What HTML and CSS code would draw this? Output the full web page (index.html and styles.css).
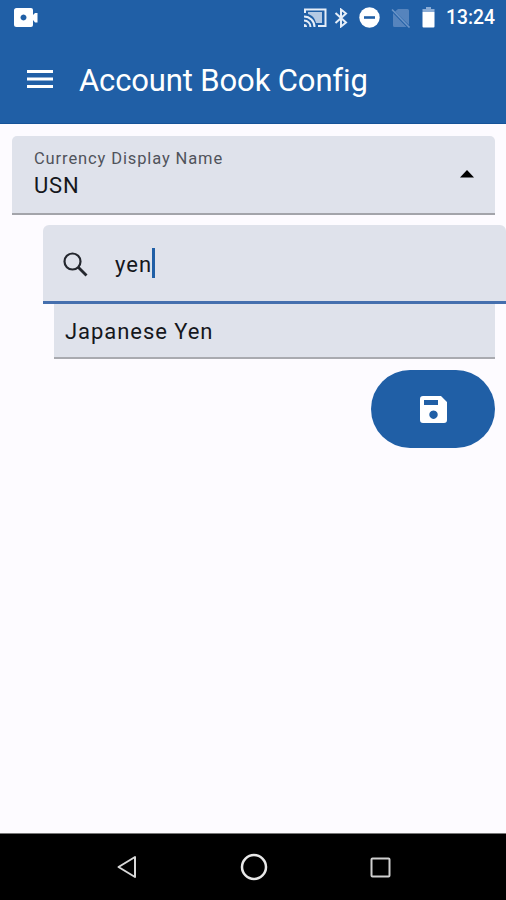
FILE: index.html
```html
<!DOCTYPE html>
<html lang="en">
<head>
<meta charset="utf-8">
<title>Account Book Config</title>
<link rel="stylesheet" href="styles.css">
</head>
<body>
<div class="screen">
  <header class="top">
    <div class="status">
      <svg class="camera" width="24" height="19" viewBox="0 0 24 19"><path fill="#fff" fill-rule="evenodd" d="M2.500 0H17a2 2 0 0 1 2 2V7L21 5H23.500V14.500H21L19 12V17a2 2 0 0 1-2 2H2.500A2.500 2.500 0 0 1 0 16.500V2.500A2.500 2.500 0 0 1 2.500 0ZM9.500 6.500a3 3 0 1 0 .01 0Z"/></svg>
      <svg class="cast" width="24" height="20" viewBox="0 0 24 20"><path fill="#b5cae4" d="M5 4H19V15H13C12 10 9 7 5 6Z"/><path fill="none" stroke="#e6eef8" stroke-width="2" d="M2 5V1.500H22.500V18H15M1 8.500A10.500 10.500 0 0 1 11.500 19M1 12.500A6.500 6.500 0 0 1 7.500 19"/><path fill="#e6eef8" d="M1 16a3 3 0 0 1 3 3H1Z"/></svg>
      <svg class="bluetooth" width="14" height="20" viewBox="0 0 14 20"><path fill="none" stroke="#e6eef8" stroke-width="2" d="M1.500 5L12 14.500L7 18.500V1.500L12 5.500L1.500 15"/></svg>
      <svg class="dnd" width="21" height="21" viewBox="0 0 21 21"><circle cx="10.500" cy="10.500" r="10.200" fill="#fff"/><path stroke="#205fa6" stroke-width="2.600" d="M5 10.500H16"/></svg>
      <svg class="nosim" width="20" height="20" viewBox="0 0 20 20"><path fill="#5684bd" d="M7 1H16.500a1.500 1.500 0 0 1 1.500 1.500V17L4 3.500ZM2 5L15.500 19H3.500A1.500 1.500 0 0 1 2 17.500Z"/><path stroke="#6c95c8" stroke-width="1.600" d="M1 1.500L18.500 19.500"/></svg>
      <svg class="battery" width="13" height="21" viewBox="0 0 13 21"><path fill="#8bacd5" d="M4 0H9V2H12.500V5H.5V2H4Z"/><path fill="#fff" d="M.5 5H12.500V19.500a1 1 0 0 1-1 1H1.500a1 1 0 0 1-1-1Z"/></svg>
      <span class="clock">13:24</span>
    </div>
    <div class="appbar">
      <svg width="26" height="19" viewBox="0 0 26 19"><path fill="#fff" d="M0 0H26V3H0ZM0 7.500H26V10.500H0ZM0 15H26V18H0Z"/></svg>
      <h1>Account Book Config</h1>
    </div>
  </header>
  <main>
    <div class="select">
      <div><div class="label">Currency Display Name</div><div class="value">USN</div></div>
      <svg width="14" height="8" viewBox="0 0 14 8"><path d="M0 7.500L7 0L14 7.500Z"/></svg>
    </div>
    <div class="search">
      <svg width="25" height="25" viewBox="0 0 25 25"><circle cx="9.500" cy="9.500" r="8" fill="none" stroke="#24272e" stroke-width="2.200"/><path stroke="#24272e" stroke-width="2.800" d="M15 15L23.500 23.500"/></svg>
      <span class="query">yen</span><span class="caret"></span>
    </div>
    <div class="option">Japanese Yen</div>
    <div class="save">
      <svg width="27" height="27" viewBox="0 0 27 27"><path fill="#fff" fill-rule="evenodd" d="M3 0H21L27 6V24a3 3 0 0 1-3 3H3a3 3 0 0 1-3-3V3A3 3 0 0 1 3 0ZM4 4V9H18V4ZM13.500 14.500a4.200 4.200 0 1 0 .01 0Z"/></svg>
    </div>
  </main>
  <nav>
    <svg width="20" height="24" viewBox="0 0 20 24"><path fill="none" stroke="#d8d8d8" stroke-width="2" stroke-linejoin="round" d="M18 2V22L1.500 12Z"/></svg>
    <svg width="28" height="28" viewBox="0 0 28 28"><circle cx="14" cy="14" r="12" fill="none" stroke="#e8e8e8" stroke-width="2.500"/></svg>
    <svg width="21" height="21" viewBox="0 0 21 21"><rect x="1.500" y="1.500" width="18" height="18" rx="1" fill="none" stroke="#d0d0d0" stroke-width="2"/></svg>
  </nav>
</div>
</body>
</html>
```
FILE: styles.css
```css
* { box-sizing: border-box; }
body { margin: 0; font-family: Roboto, "Liberation Sans", sans-serif; background: #fdfbff; }
svg { display: block; flex: none; }
.screen { width: 506px; height: 900px; display: flex; flex-direction: column; overflow: hidden; }
.top { height: 124px; background: #205fa6; border-bottom: 1px solid #165398; color: #fff; flex: none; }
.status { height: 35px; display: flex; align-items: center; padding: 0 10px 0 14px; }
.cast { margin-left: 265px; }
.bluetooth { margin-left: 7px; }
.dnd { margin-left: 11px; margin-right: 11px; }
.battery { margin-left: 11px; }
.clock { margin-left: 11px; padding-top: 1px; font-size: 19.3px; font-weight: 500; line-height: 34px; white-space: nowrap; }
.appbar { height: 89px; display: flex; align-items: center; padding-left: 27px; gap: 26px; }
h1 { margin: 0; padding-top: 2px; font-size: 31px; font-weight: 400; letter-spacing: -.13px; line-height: 40px; white-space: nowrap; }
main { flex: 1; padding: 12px 11px 0 12px; display: flex; flex-direction: column; }
.select { height: 79px; background: #dfe2eb; border-bottom: 2px solid #a3a4aa; border-radius: 5px 5px 0 0; display: flex; justify-content: space-between; padding: 12px 21px 0 22px; }
.select svg { margin-top: 22px; }
.label { font-size: 16.5px; line-height: 22px; color: #50535b; letter-spacing: .88px; }
.value { font-size: 22px; line-height: 32px; letter-spacing: .8px; color: #15171c; }
.search { height: 79px; margin: 10px -11px 0 31px; background: #dfe2eb; border-bottom: 3px solid #456fae; border-radius: 6px 6px 0 0; display: flex; align-items: center; padding-left: 20px; }
.search svg { margin-top: 2px; }
.query { margin-left: 27px; padding-top: 2px; font-size: 22px; letter-spacing: 1px; color: #15171c; }
.caret { width: 3px; height: 30px; background: #205fa6; }
.option { height: 55px; margin-left: 42px; background: #dfe2eb; border-bottom: 2px solid #a9aab0; padding-left: 11px; font-size: 22px; line-height: 56px; letter-spacing: .95px; color: #15171c; }
.save { width: 124px; height: 78px; margin: 11px 0 0; align-self: flex-end; border-radius: 39px; background: #205fa6; display: flex; align-items: center; justify-content: center; }
nav { height: 67px; background: #000; border-top: 1px solid #777; display: flex; align-items: center; padding-left: 117px; }
nav svg:nth-child(2) { margin-left: 103px; }
nav svg:nth-child(3) { margin-left: 102px; }
```
